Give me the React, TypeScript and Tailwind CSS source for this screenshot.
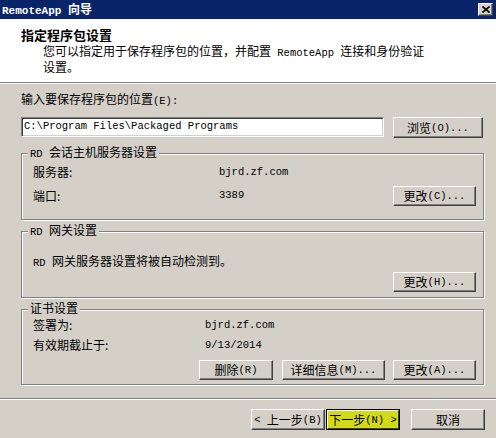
import React from "react";

function L({ children, className = "" }: { children: React.ReactNode; className?: string }) {
  return <span className={"font-['Liberation_Mono'] text-[10.5px] " + className}>{children}</span>;
}

function Btn({ className = "", children }: { className?: string; children: React.ReactNode }) {
  return (
    <div
      className={
        "flex items-center justify-center bg-[#d4d0c8] border border-t-white border-l-white border-r-[#404040] border-b-[#404040] shadow-[inset_-1px_-1px_0_#808080] leading-[14px] whitespace-nowrap " +
        className
      }
    >
      {children}
    </div>
  );
}

function Group({ label, className = "", children }: { label: React.ReactNode; className?: string; children: React.ReactNode }) {
  return (
    <div className={"relative w-[463px] border border-[#808080] shadow-[inset_1px_1px_0_#fff,1px_1px_0_#fff] " + className}>
      <span className="absolute left-[6px] top-[-9px] bg-[#d4d0c8] px-[2px] leading-[14px] whitespace-nowrap">{label}</span>
      {children}
    </div>
  );
}

export default function App() {
  return (
    <div className="w-[496px] h-[438px] overflow-hidden bg-[#d4d0c8] flex flex-col text-[12px] text-black font-['Noto_Sans_CJK_SC',sans-serif]">
      {/* Title bar */}
      <div className="h-[19px] bg-[#0a246a] flex items-center justify-between pl-[2px] pr-[3px] text-white font-bold">
        <span className="leading-[14px] whitespace-nowrap">
          <L className="text-[11px] font-bold">RemoteApp </L>
          <span>向导</span>
        </span>
        <div className="w-[15px] h-[13px] bg-[#d4d0c8] border border-t-white border-l-white border-r-[#404040] border-b-[#404040] shadow-[inset_-1px_-1px_0_#808080] flex items-center justify-center">
          <svg width="8" height="7" viewBox="0 0 8 7">
            <path d="M0.5 0.5 L7.5 6.5 M7.5 0.5 L0.5 6.5" stroke="#000" strokeWidth="1.6" />
          </svg>
        </div>
      </div>

      {/* Header */}
      <div className="h-[64px] bg-white border-b border-[#808080] pt-[9px] pl-[21px]">
        <div className="text-[13px] font-bold leading-[14px]">指定程序包设置</div>
        <div className="pl-[22px] mt-[2px] leading-[13px] whitespace-nowrap">
          您可以指定用于保存程序包的位置，并配置<L> RemoteApp </L>连接和身份验证
          <br />
          设置。
        </div>
      </div>
      <div className="h-[1px] bg-white" />

      {/* Body */}
      <div className="pl-[21px]">
        <div className="mt-[8px] leading-[14px]">
          输入要保存程序包的位置<L>(E):</L>
        </div>
        <div className="mt-[9px] flex items-start">
          <div className="w-[363px] h-[20px] bg-white border border-t-[#808080] border-l-[#808080] border-r-white border-b-white shadow-[inset_1px_1px_0_#404040,inset_-1px_-1px_0_#d4d0c8] flex items-center pl-[2px]">
            <L>C:\Program Files\Packaged Programs</L>
          </div>
          <Btn className="ml-[9px] w-[90px] h-[21px]">
            浏览<L>(O)...</L>
          </Btn>
        </div>

        <Group className="mt-[15px] h-[67px]" label={<><L>RD </L>会话主机服务器设置</>}>
          <div className="pt-[11px] pl-[11px] pr-[7px]">
            <div className="flex leading-[14px]">
              <span className="w-[186px]">服务器:</span>
              <L>bjrd.zf.com</L>
            </div>
            <div className="mt-[7px] flex items-center h-[20px]">
              <span className="w-[186px] leading-[14px]">端口:</span>
              <L className="flex-1">3389</L>
              <Btn className="w-[83px] h-[20px]">
                更改<L>(C)...</L>
              </Btn>
            </div>
          </div>
        </Group>

        <Group className="mt-[11px] h-[67px]" label={<><L>RD </L>网关设置</>}>
          <div className="pt-[22px] pl-[11px] pr-[7px]">
            <div className="leading-[14px]">
              <L>RD </L>网关服务器设置将被自动检测到。
            </div>
            <div className="mt-[2px] flex justify-end">
              <Btn className="w-[83px] h-[20px]">
                更改<L>(H)...</L>
              </Btn>
            </div>
          </div>
        </Group>

        <Group className="mt-[11px] h-[76px]" label="证书设置">
          <div className="pt-[8px] pl-[11px] pr-[7px]">
            <div className="flex leading-[14px]">
              <span className="w-[172px]">签署为:</span>
              <L>bjrd.zf.com</L>
            </div>
            <div className="mt-[6px] flex leading-[14px]">
              <span className="w-[172px]">有效期截止于:</span>
              <L>9/13/2014</L>
            </div>
            <div className="mt-[8px] flex justify-end">
              <Btn className="w-[74px] h-[20px]">
                删除<L>(R)</L>
              </Btn>
              <Btn className="ml-[9px] w-[103px] h-[20px]">
                详细信息<L>(M)...</L>
              </Btn>
              <Btn className="ml-[8px] w-[83px] h-[20px]">
                更改<L>(A)...</L>
              </Btn>
            </div>
          </div>
        </Group>
      </div>

      {/* Separator */}
      <div className="mt-[13px] h-[1px] bg-[#808080]" />
      <div className="h-[1px] bg-white" />

      {/* Footer */}
      <div className="mt-[9px] flex justify-end pr-[11px]">
        <Btn className="w-[74px] h-[21px]">
          <L>&lt;&nbsp;</L>上一步<L>(B)</L>
        </Btn>
        <div className="ml-[1px] w-[74px] h-[21px] border border-black">
          <div className="w-full h-full flex items-center justify-center bg-[#d2d916] border border-t-white border-l-white border-r-[#404040] border-b-[#404040] leading-[14px] whitespace-nowrap">
            下一步<L>(N)&nbsp;&gt;</L>
          </div>
        </div>
        <Btn className="ml-[11px] w-[74px] h-[21px]">取消</Btn>
      </div>
    </div>
  );
}
